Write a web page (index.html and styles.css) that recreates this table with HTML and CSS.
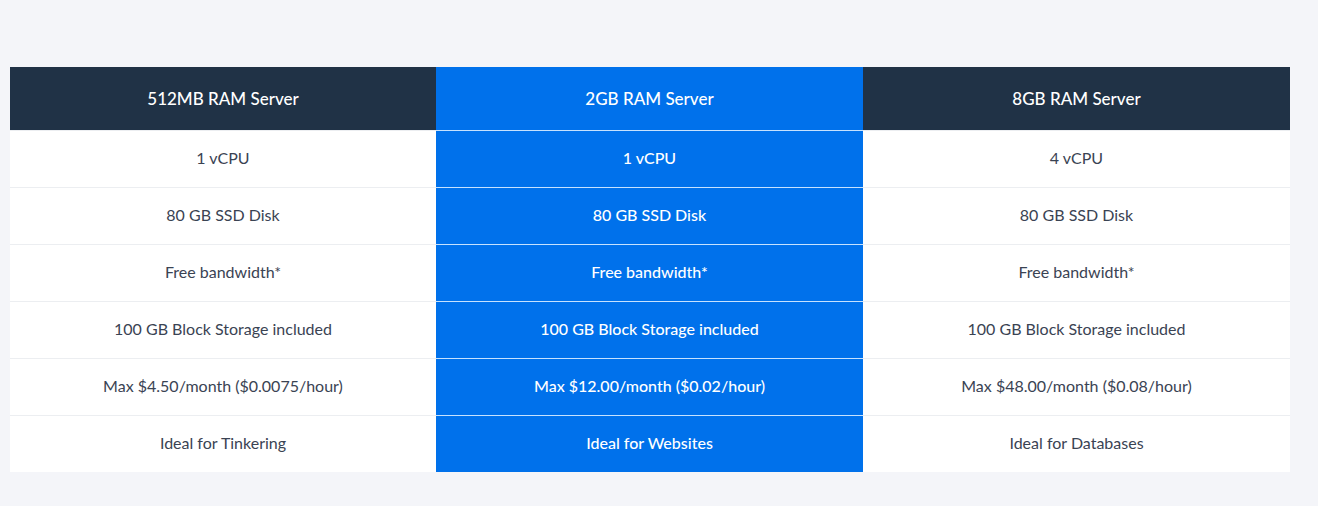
FILE: index.html
```html
<!DOCTYPE html>
<html>
<head>
<meta charset="utf-8">
<link rel="stylesheet" href="styles.css">
</head>
<body>
<div class="plans">
  <div class="plan">
    <div class="plan-head">512MB RAM Server</div>
    <div class="cell">1 vCPU</div>
    <div class="cell">80 GB SSD Disk</div>
    <div class="cell">Free bandwidth*</div>
    <div class="cell">100 GB Block Storage included</div>
    <div class="cell">Max $4.50/month ($0.0075/hour)</div>
    <div class="cell">Ideal for Tinkering</div>
  </div>
  <div class="plan plan-featured">
    <div class="plan-head">2GB RAM Server</div>
    <div class="cell">1 vCPU</div>
    <div class="cell">80 GB SSD Disk</div>
    <div class="cell">Free bandwidth*</div>
    <div class="cell">100 GB Block Storage included</div>
    <div class="cell">Max $12.00/month ($0.02/hour)</div>
    <div class="cell">Ideal for Websites</div>
  </div>
  <div class="plan">
    <div class="plan-head">8GB RAM Server</div>
    <div class="cell">4 vCPU</div>
    <div class="cell">80 GB SSD Disk</div>
    <div class="cell">Free bandwidth*</div>
    <div class="cell">100 GB Block Storage included</div>
    <div class="cell">Max $48.00/month ($0.08/hour)</div>
    <div class="cell">Ideal for Databases</div>
  </div>
</div>
</body>
</html>
```

FILE: styles.css
```css
html, body {
  margin: 0;
  padding: 0;
  background: #f4f5f9;
  font-family: Lato, "Liberation Sans", sans-serif;
}
body {
  padding: 67px 28px 34px 10px;
}
.plans {
  display: grid;
  grid-template-columns: 426px 427px 427px;
  width: 1280px;
}
.plan {
  display: flex;
  flex-direction: column;
  background: #ffffff;
  color: #3a4353;
}
.plan-head {
  height: 63px;
  display: flex;
  align-items: center;
  justify-content: center;
  background: #203246;
  color: #ffffff;
  font-size: 17px;
  font-weight: 500;
}
.cell {
  height: 56px;
  box-sizing: border-box;
  padding-bottom: 4px;
  border-top: 1px solid #eceef1;
  height: 57px;
  display: flex;
  align-items: center;
  justify-content: center;
  font-size: 16px;
}
.plan-featured {
  background: #0071eb;
  color: #ffffff;
}
.plan-featured .plan-head {
  background: #0071eb;
}
.plan-featured .cell {
  border-top-color: #c6e2ff;
  font-weight: 500;
}
```
